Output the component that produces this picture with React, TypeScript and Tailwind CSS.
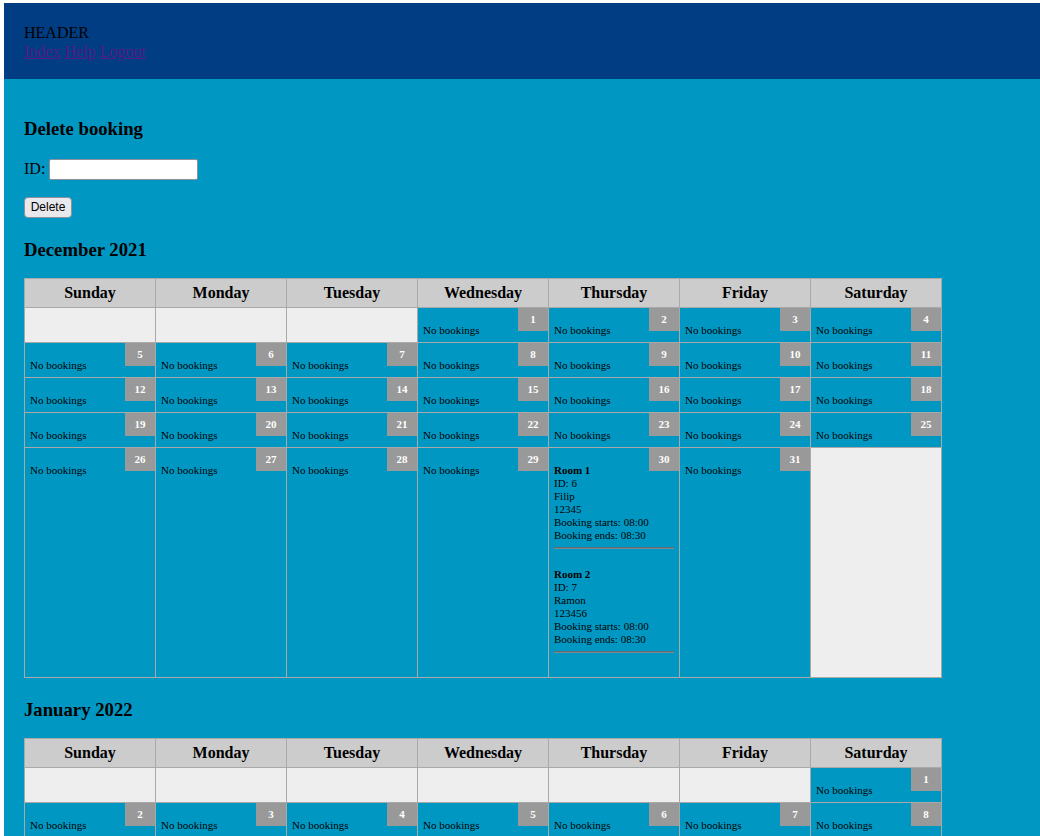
import React from "react";

type Booking = { room: string; id: number; name: string; phone: string; start: string; end: string };

const decBookings: Record<number, Booking[]> = {
  30: [
    { room: "Room 1", id: 6, name: "Filip", phone: "12345", start: "08:00", end: "08:30" },
    { room: "Room 2", id: 7, name: "Ramon", phone: "123456", start: "08:00", end: "08:30" },
  ],
};

const DAYS = ["Sunday", "Monday", "Tuesday", "Wednesday", "Thursday", "Friday", "Saturday"];

function weeks(startDay: number, count: number): (number | null)[][] {
  const cells: (number | null)[] = [];
  for (let i = 0; i < startDay; i++) cells.push(null);
  for (let d = 1; d <= count; d++) cells.push(d);
  while (cells.length % 7 !== 0) cells.push(null);
  const out: (number | null)[][] = [];
  for (let i = 0; i < cells.length; i += 7) out.push(cells.slice(i, i + 7));
  return out;
}

function Hr() {
  return <div className="my-[5.5px] h-[2px] border-t border-t-[#5f6b70] border-b border-b-[#7d8a8f]" />;
}

function DayCell({ day, bookings }: { day: number; bookings?: Booking[] }) {
  return (
    <td className="p-0 align-top border border-[#a9a9a9] bg-[#0098c3]">
      <div className="relative pt-[16px] pb-[5px] px-[5px] text-[11px] leading-[13px] text-black">
        <div className="absolute top-0 right-0 w-[30px] h-[23px] bg-[#999999] text-white font-bold flex items-center justify-center text-[11px]">
          {day}
        </div>
        {bookings && bookings.length > 0 ? (
          <div>
            {bookings.map((b, i) => (
              <div key={i}>
                {i > 0 && <div className="h-[13px]" />}
                <div className="font-bold">{b.room}</div>
                <div>ID: {b.id}</div>
                <div>{b.name}</div>
                <div>{b.phone}</div>
                <div>Booking starts: {b.start}</div>
                <div>Booking ends: {b.end}</div>
                <Hr />
              </div>
            ))}
            <div className="h-[13px]" />
          </div>
        ) : (
          <div>No bookings</div>
        )}
      </div>
    </td>
  );
}

function Calendar({ startDay, count, bookings }: { startDay: number; count: number; bookings: Record<number, Booking[]> }) {
  const ws = weeks(startDay, count);
  return (
    <table className="mt-[17.5px] w-[918px] table-fixed border-collapse">
      <thead>
        <tr>
          {DAYS.map((d) => (
            <th
              key={d}
              className="border border-[#a9a9a9] bg-[#cccccc] py-[5px] leading-[18px] text-[16px] font-bold text-black text-center"
            >
              {d}
            </th>
          ))}
        </tr>
      </thead>
      <tbody>
        {ws.map((w, wi) => (
          <tr key={wi}>
            {w.map((d, di) =>
              d === null ? (
                <td key={di} className="p-0 border border-[#a9a9a9] bg-[#eeeeee]">
                  <div className="h-[34px]" />
                </td>
              ) : (
                <DayCell key={di} day={d} bookings={bookings[d]} />
              )
            )}
          </tr>
        ))}
      </tbody>
    </table>
  );
}

export default function App() {
  return (
    <div className="bg-white pt-[3px] pl-[4px] font-['Liberation_Serif',serif] text-black">
      <header className="bg-[#003d82] px-[20px] pt-[20px] pb-[18px] text-[16px] leading-[19px]">
        <div>HEADER</div>
        <div>
          <a href="#" className="text-[#551a8b] underline">Index</a>{" "}
          <a href="#" className="text-[#551a8b] underline">Help</a>{" "}
          <a href="#" className="text-[#551a8b] underline">Logout</a>
        </div>
      </header>
      <main className="bg-[#0098c3] px-[20px] pt-[20px] pb-[40px]">
        <h3 className="mt-[19px] text-[18.72px] leading-[21.5px] font-bold">Delete booking</h3>
        <div className="mt-[18.5px] flex items-center h-[22px] text-[16px]">
          <span>ID:</span>
          <input
            type="text"
            className="ml-[4px] w-[149px] h-[21px] bg-white border border-[#8f8f9d] rounded-[2px] px-[2px] text-[13px] font-['Liberation_Sans',sans-serif]"
          />
        </div>
        <div className="mt-[17px] h-[21px] flex">
          <button className="h-[21px] w-[48px] bg-[#e9e9ed] border border-[#8f8f9d] rounded-[4px] text-[12px] leading-[19px] text-black font-['Liberation_Sans',sans-serif]">
            Delete
          </button>
        </div>
        <h3 className="mt-[20.5px] text-[18.72px] leading-[21.5px] font-bold">December 2021</h3>
        <Calendar startDay={3} count={31} bookings={decBookings} />
        <h3 className="mt-[21px] text-[18.72px] leading-[21.5px] font-bold">January 2022</h3>
        <Calendar startDay={6} count={31} bookings={{}} />
      </main>
    </div>
  );
}
